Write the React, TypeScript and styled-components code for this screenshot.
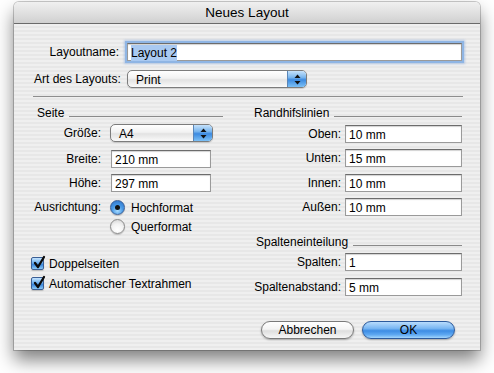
import React from 'react';
import styled, { createGlobalStyle } from 'styled-components';

const GlobalStyle = createGlobalStyle`
  html, body {
    margin: 0;
    padding: 0;
    background: #ffffff;
  }
  body {
    font-family: "Liberation Sans", Arial, sans-serif;
    font-size: 12px;
    color: #000;
  }
  * {
    box-sizing: border-box;
  }
`;

const Stage = styled.div`
  width: 494px;
  height: 373px;
  padding: 2px 0 0 14px;
  overflow: hidden;
`;

const Window = styled.div`
  width: 466px;
  height: 348px;
  border-radius: 5px 5px 0 0;
  overflow: hidden;
  box-shadow: 0 10px 18px rgba(0, 0, 0, 0.5), 0 0 0 1px rgba(0, 0, 0, 0.2);
  display: flex;
  flex-direction: column;
`;

const TitleBar = styled.div`
  height: 22px;
  flex: none;
  display: flex;
  align-items: center;
  justify-content: center;
  font-size: 13.5px;
  background: linear-gradient(to bottom, #f0f0f0 0%, #e4e4e4 40%, #d0d0d0 100%);
  border-bottom: 1px solid #6a6a6a;
  padding-bottom: 1px;
`;

const Body = styled.div`
  flex: 1;
  display: flex;
  flex-direction: column;
  padding: 0 18px 0 20px;
  background: repeating-linear-gradient(to bottom, #efefef 0 2px, #e7e7e7 2px 4px);
`;

const TopRow = styled.div<{ $mt: number }>`
  display: grid;
  grid-template-columns: 85px 1fr;
  column-gap: 8px;
  align-items: center;
  height: 18px;
  margin-top: ${p => p.$mt}px;
`;

const Label = styled.div`
  text-align: right;
  white-space: nowrap;
`;

const Separator = styled.div`
  height: 1px;
  margin: 8px -1px 0;
  background: #8e8e8e;
`;

const Columns = styled.div`
  display: grid;
  grid-template-columns: 189px 208px;
  column-gap: 31px;
`;

const Column = styled.div`
  display: flex;
  flex-direction: column;
`;

const GroupHeader = styled.div<{ $mt: number; $indent: number }>`
  display: flex;
  align-items: center;
  height: 14px;
  margin-top: ${p => p.$mt}px;
  padding-left: ${p => p.$indent}px;
  white-space: nowrap;

  &::after {
    content: '';
    flex: 1;
    height: 1px;
    margin: 6px 0 0 5px;
    background: #8a8a8a;
  }
`;

const FieldRow = styled.div<{ $label: number; $gap: number; $mt: number }>`
  display: grid;
  grid-template-columns: ${p => p.$label}px 1fr;
  column-gap: ${p => p.$gap}px;
  align-items: center;
  height: 18px;
  margin-top: ${p => p.$mt}px;
`;

const TextField = styled.div<{ $width?: number; $focused?: boolean }>`
  width: ${p => (p.$width ? `${p.$width}px` : '100%')};
  height: 18px;
  padding: 1px 3px 0;
  display: flex;
  align-items: center;
  background: #ffffff;
  border: 1px solid #9a9a9a;
  border-top-color: #6c6c6c;
  box-shadow: inset 0 1px 1px rgba(0, 0, 0, 0.18)
    ${p => (p.$focused ? ', 0 0 0 2px #8fb5e4, 0 0 2px 3px rgba(120, 160, 220, 0.45)' : '')};
  white-space: nowrap;
`;

const Selected = styled.span`
  background: #a9c9f1;
  padding: 1px 0;
`;

const PopUp = styled.div<{ $width: number }>`
  width: ${p => p.$width}px;
  height: 18px;
  display: flex;
  align-items: stretch;
  border: 1px solid #7c7c7c;
  border-radius: 5px;
  overflow: hidden;
  background: linear-gradient(to bottom, #ffffff 0%, #f2f2f2 45%, #e2e2e2 55%, #fafafa 100%);
  box-shadow: 0 1px 1px rgba(0, 0, 0, 0.15);
`;

const PopUpText = styled.div`
  flex: 1;
  display: flex;
  align-items: center;
  padding: 1px 0 0 8px;
`;

const PopUpArrows = styled.div`
  width: 19px;
  flex: none;
  display: flex;
  align-items: center;
  justify-content: center;
  border-left: 1px solid #5a86b8;
  background: linear-gradient(to bottom, #c6e2fb 0%, #7ab6ee 40%, #3c8ae0 55%, #7cc0f6 100%);
`;

const RadioGroup = styled.div`
  display: flex;
  flex-direction: column;
  gap: 4px;
`;

const RadioLine = styled.div`
  display: flex;
  align-items: center;
  gap: 6px;
  height: 15px;
`;

const RadioDot = styled.span<{ $checked?: boolean }>`
  width: 15px;
  height: 15px;
  border-radius: 50%;
  flex: none;
  display: flex;
  align-items: center;
  justify-content: center;
  border: 1px solid ${p => (p.$checked ? '#3b5f95' : '#8a8a8a')};
  background: ${p =>
    p.$checked
      ? 'radial-gradient(circle at 50% 75%, #a9dcff 0%, #4a9ae6 45%, #2a6fc8 100%)'
      : 'radial-gradient(circle at 50% 75%, #ffffff 0%, #f2f2f2 50%, #cfcfcf 100%)'};
  box-shadow: 0 1px 1px rgba(0, 0, 0, 0.2);

  &::after {
    content: '';
    display: ${p => (p.$checked ? 'block' : 'none')};
    width: 5px;
    height: 5px;
    border-radius: 50%;
    background: #111;
  }
`;

const AusrichtungRow = styled.div`
  display: grid;
  grid-template-columns: 67px 1fr;
  column-gap: 9px;
  margin-top: 8px;
`;

const CheckLine = styled.div<{ $mt: number }>`
  display: flex;
  align-items: center;
  gap: 5px;
  height: 15px;
  margin: ${p => p.$mt}px 0 0 -3px;
`;

const CheckBox = styled.span`
  width: 13px;
  height: 13px;
  flex: none;
  position: relative;
  border: 1px solid #3b5f95;
  border-radius: 2px;
  background: linear-gradient(to bottom, #c4e3fd 0%, #6aaeef 45%, #3a86dc 60%, #8ccaf8 100%);
  box-shadow: 0 1px 1px rgba(0, 0, 0, 0.2);

  svg {
    position: absolute;
    left: 0px;
    top: -3px;
  }
`;

const ButtonRow = styled.div`
  margin-top: auto;
  display: flex;
  justify-content: flex-end;
  gap: 8px;
  padding: 0 7px 11px 0;
`;

const AquaButton = styled.button<{ $default?: boolean }>`
  width: 93px;
  height: 18px;
  padding: 0;
  border-radius: 9px;
  font-family: inherit;
  font-size: 12px;
  color: #000;
  border: 1px solid ${p => (p.$default ? '#2c5a9c' : '#7a7a7a')};
  background: ${p =>
    p.$default
      ? 'linear-gradient(to bottom, #b8dcfd 0%, #79b6f2 40%, #3d8ce4 55%, #5fa9f2 80%, #a4d6fd 100%)'
      : 'linear-gradient(to bottom, #ffffff 0%, #f4f4f4 45%, #dedede 55%, #f6f6f6 100%)'};
  box-shadow: 0 1px 2px rgba(0, 0, 0, 0.3);
`;

const Arrows = () => (
  <svg width="7" height="11" viewBox="0 0 7 11">
    <path d="M3.5 0.5 L6.5 4 L0.5 4 Z" fill="#111" />
    <path d="M0.5 7 L6.5 7 L3.5 10.5 Z" fill="#111" />
  </svg>
);

const Check = () => (
  <svg width="15" height="15" viewBox="0 0 15 15">
    <path d="M3 8 L6 12 L12 2" fill="none" stroke="#0b0b0b" strokeWidth="2.3" strokeLinecap="round" strokeLinejoin="round" />
  </svg>
);

const margins = [
  { label: 'Oben:', value: '10 mm', mt: 5 },
  { label: 'Unten:', value: '15 mm', mt: 6 },
  { label: 'Innen:', value: '10 mm', mt: 7 },
  { label: 'Außen:', value: '10 mm', mt: 6 },
];

const App = () => (
  <Stage>
    <GlobalStyle />
    <Window>
      <TitleBar>Neues Layout</TitleBar>
      <Body>
        <TopRow $mt={19}>
          <Label>Layoutname:</Label>
          <TextField $focused>
            <Selected>Layout 2</Selected>
          </TextField>
        </TopRow>
        <TopRow $mt={9}>
          <Label>Art des Layouts:</Label>
          <PopUp $width={180}>
            <PopUpText>Print</PopUpText>
            <PopUpArrows>
              <Arrows />
            </PopUpArrows>
          </PopUp>
        </TopRow>
        <Separator />

        <Columns>
          <Column>
            <GroupHeader $mt={9} $indent={3}>Seite</GroupHeader>
            <FieldRow $label={67} $gap={9} $mt={4}>
              <Label>Größe:</Label>
              <PopUp $width={103}>
                <PopUpText>A4</PopUpText>
                <PopUpArrows>
                  <Arrows />
                </PopUpArrows>
              </PopUp>
            </FieldRow>
            <FieldRow $label={67} $gap={10} $mt={8}>
              <Label>Breite:</Label>
              <TextField $width={100}>210 mm</TextField>
            </FieldRow>
            <FieldRow $label={67} $gap={10} $mt={6}>
              <Label>Höhe:</Label>
              <TextField $width={100}>297 mm</TextField>
            </FieldRow>
            <AusrichtungRow>
              <Label>Ausrichtung:</Label>
              <RadioGroup>
                <RadioLine>
                  <RadioDot $checked />
                  Hochformat
                </RadioLine>
                <RadioLine>
                  <RadioDot />
                  Querformat
                </RadioLine>
              </RadioGroup>
            </AusrichtungRow>
            <CheckLine $mt={22}>
              <CheckBox>
                <Check />
              </CheckBox>
              Doppelseiten
            </CheckLine>
            <CheckLine $mt={5}>
              <CheckBox>
                <Check />
              </CheckBox>
              Automatischer Textrahmen
            </CheckLine>
          </Column>

          <Column>
            <GroupHeader $mt={9} $indent={0}>Randhifslinien</GroupHeader>
            {margins.map(m => (
              <FieldRow key={m.label} $label={87} $gap={4} $mt={m.mt}>
                <Label>{m.label}</Label>
                <TextField>{m.value}</TextField>
              </FieldRow>
            ))}
            <GroupHeader $mt={19} $indent={2}>Spalteneinteilung</GroupHeader>
            <FieldRow $label={87} $gap={4} $mt={4}>
              <Label>Spalten:</Label>
              <TextField>1</TextField>
            </FieldRow>
            <FieldRow $label={87} $gap={4} $mt={7}>
              <Label>Spaltenabstand:</Label>
              <TextField>5 mm</TextField>
            </FieldRow>
          </Column>
        </Columns>

        <ButtonRow>
          <AquaButton>Abbrechen</AquaButton>
          <AquaButton $default>OK</AquaButton>
        </ButtonRow>
      </Body>
    </Window>
  </Stage>
);

export default App;
